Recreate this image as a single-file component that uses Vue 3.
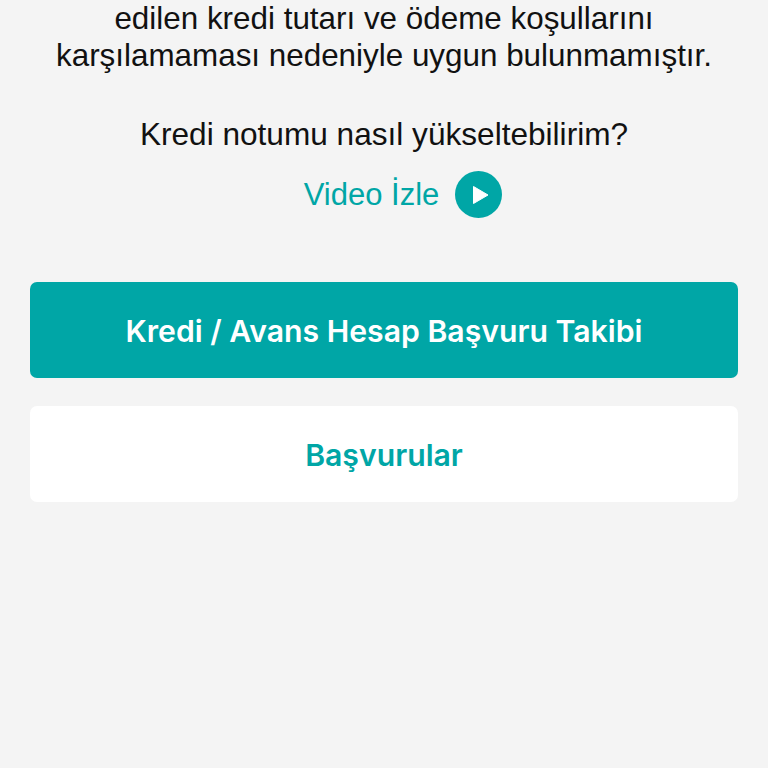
<template>
  <div class="screen">
    <div class="message">
      <p>edilen kredi tutarı ve ödeme koşullarını</p>
      <p>karşılamaması nedeniyle uygun bulunmamıştır.</p>
    </div>
    <p class="question">Kredi notumu nasıl yükseltebilirim?</p>
    <div class="video-link">
      <span>Video İzle</span>
      <svg class="play" width="47" height="47" viewBox="0 0 47 47">
        <circle cx="23.5" cy="23.5" r="23.5" fill="#00a6a6" />
        <path d="M18.5 15.5 L33 24 L18.5 32.5 Z" fill="#fff" stroke="#fff" stroke-width="1" stroke-linejoin="round" />
      </svg>
    </div>
    <div class="actions">
      <button class="btn primary">Kredi / Avans Hesap Başvuru Takibi</button>
      <button class="btn secondary">Başvurular</button>
    </div>
  </div>
</template>

<script setup>
</script>

<style>
html, body {
  margin: 0;
  background: #f4f4f4;
}
</style>

<style scoped>
.screen {
  width: 768px;
  height: 768px;
  overflow: hidden;
  background: #f4f4f4;
  font-family: "Liberation Sans", Arial, sans-serif;
  color: #111;
  text-align: center;
  display: flex;
  flex-direction: column;
  align-items: center;
}
p {
  margin: 0;
}
.message {
  font-size: 31.4px;
  line-height: 37px;
}
.question {
  font-size: 31.6px;
  line-height: 38px;
  margin-top: 41px;
}
.video-link {
  display: flex;
  align-items: center;
  gap: 16px;
  margin-top: 18px;
  margin-left: 38px;
  color: #00a6a6;
  font-size: 31px;
}
.actions {
  align-self: stretch;
  display: flex;
  flex-direction: column;
  gap: 28px;
  padding: 0 30px;
  margin-top: 64px;
}
.btn {
  height: 96px;
  border: none;
  border-radius: 7px;
  padding: 2px 0 0;
  font-family: Inter, "Liberation Sans", sans-serif;
  font-size: 30.2px;
  font-weight: 600;
}
.primary {
  background: #00a6a6;
  color: #fff;
}
.secondary {
  background: #fff;
  color: #00a6a6;
}
</style>
